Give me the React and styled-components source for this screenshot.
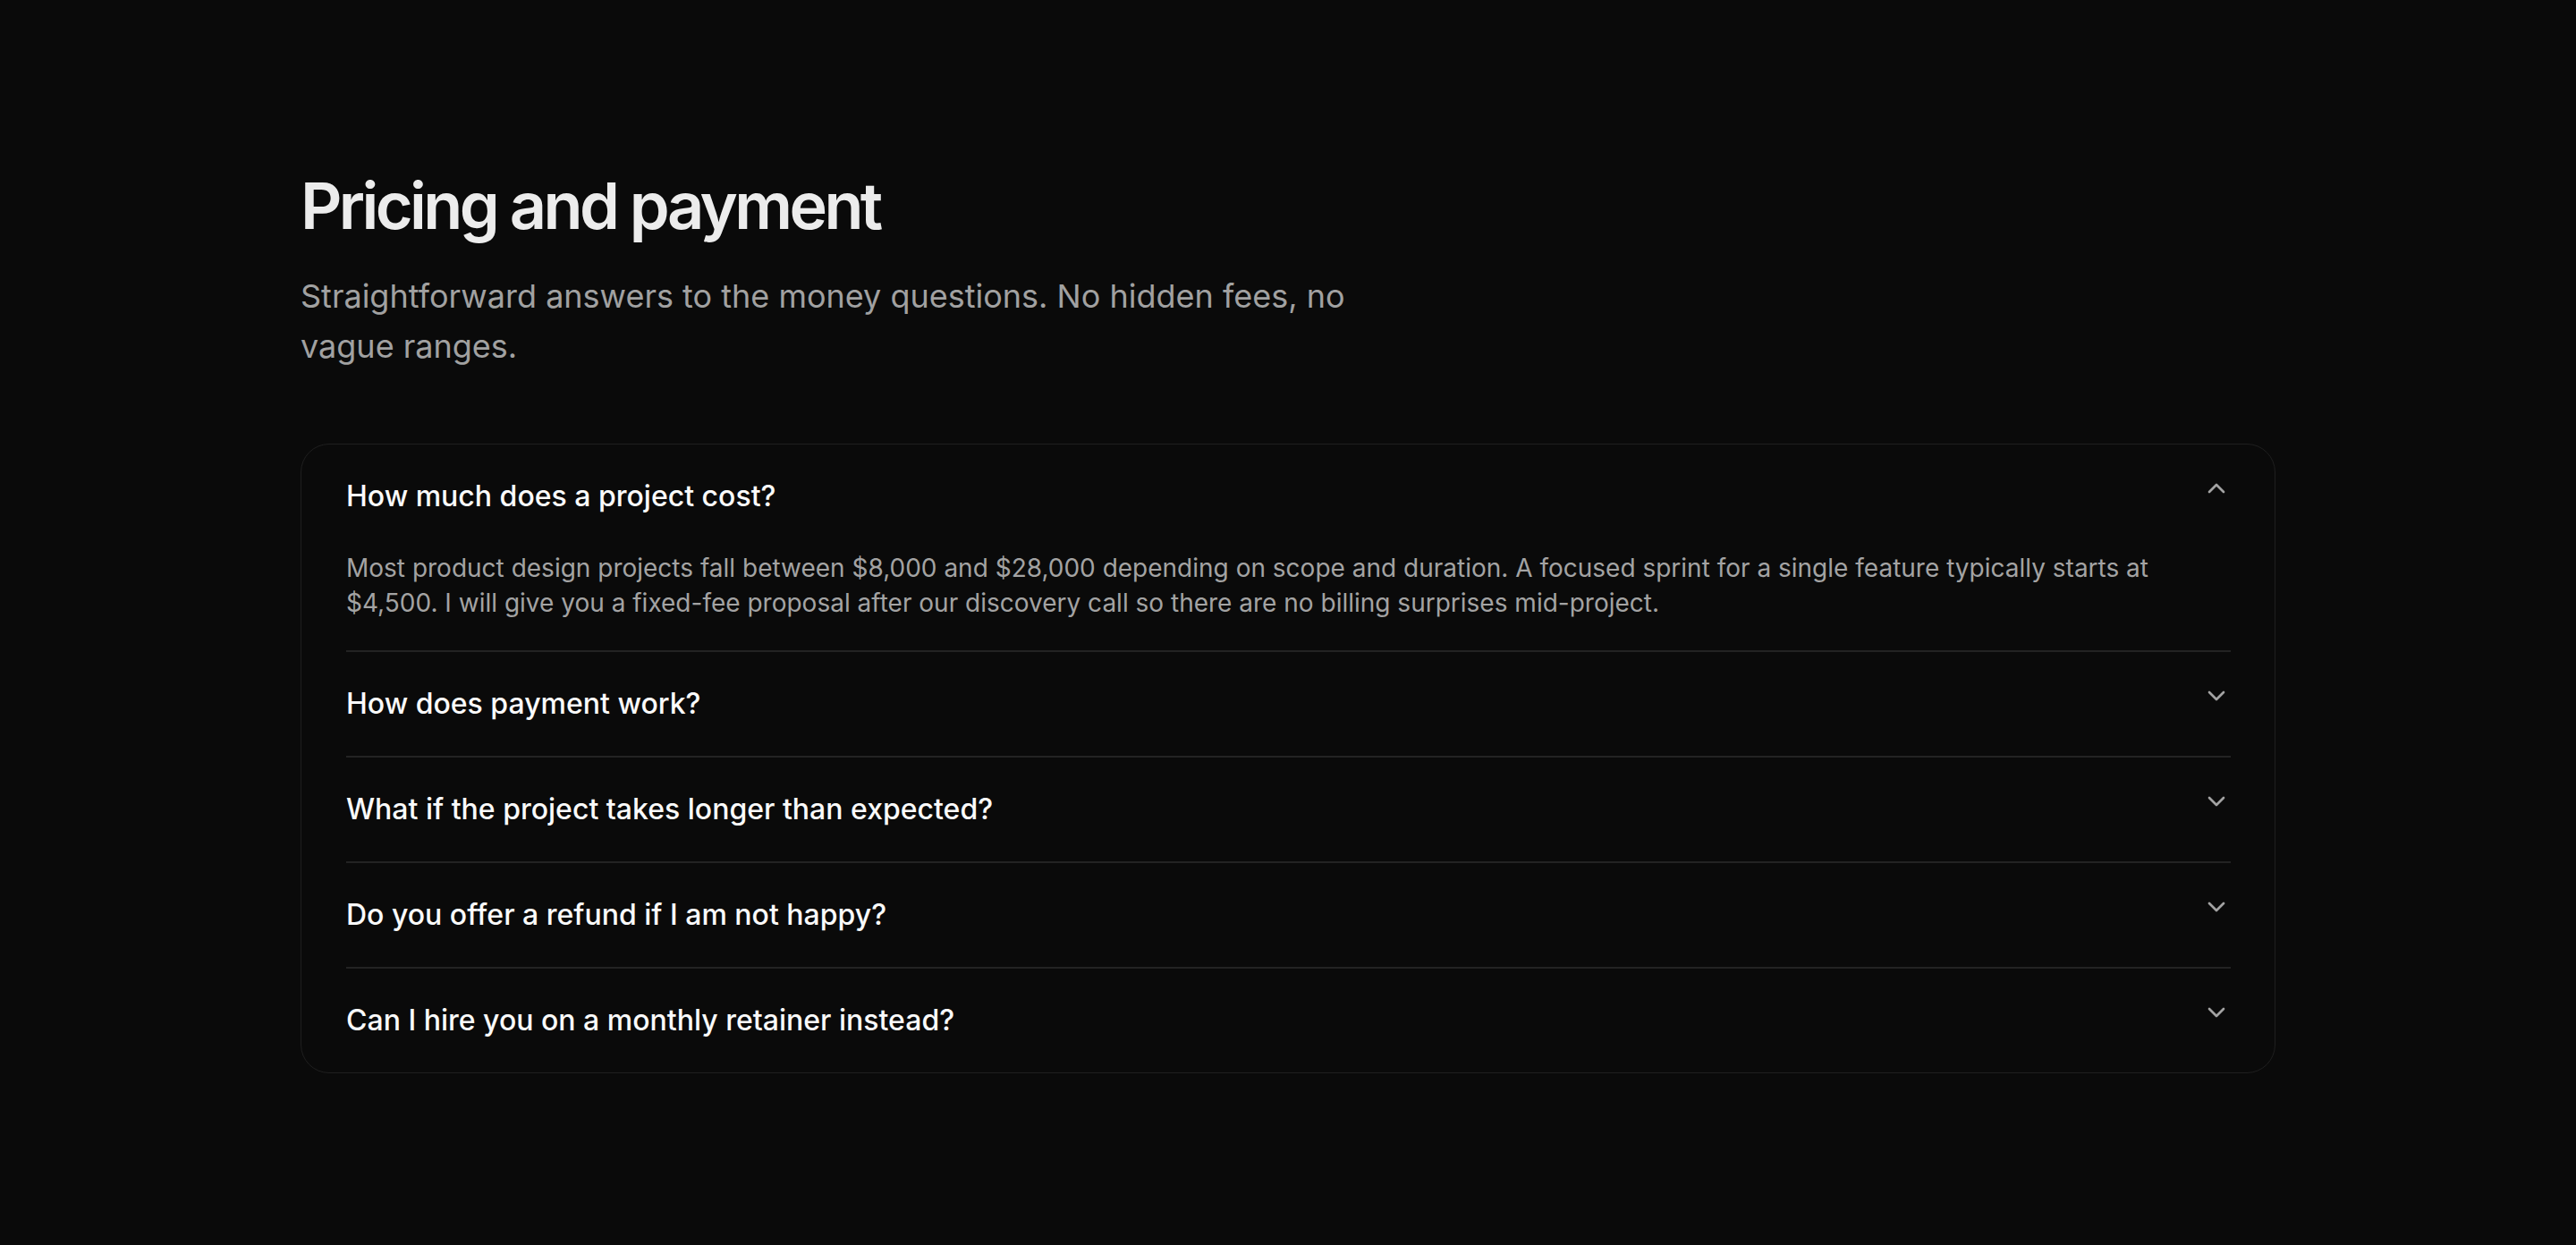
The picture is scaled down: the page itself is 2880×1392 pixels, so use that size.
import React, { useState } from 'react';
import styled, { createGlobalStyle } from 'styled-components';
import { ChevronDown, ChevronUp } from 'lucide-react';

const GlobalStyle = createGlobalStyle`
	* {
		box-sizing: border-box;
	}
	body {
		margin: 0;
		background: #0a0a0a;
		font-family: Inter, "Noto Sans", sans-serif;
		-webkit-font-smoothing: antialiased;
	}
`;

const faqs = [
	{
		q: 'How much does a project cost?',
		a: 'Most product design projects fall between $8,000 and $28,000 depending on scope and duration. A focused sprint for a single feature typically starts at $4,500. I will give you a fixed-fee proposal after our discovery call so there are no billing surprises mid-project.'
	},
	{
		q: 'How does payment work?',
		a: 'I invoice 50% up front to reserve your slot and the remaining 50% on delivery. Invoices are payable by bank transfer or card within 14 days.'
	},
	{
		q: 'What if the project takes longer than expected?',
		a: 'The fee is fixed for the agreed scope. If the scope changes, we agree on any additional work in writing before it starts.'
	},
	{
		q: 'Do you offer a refund if I am not happy?',
		a: 'If you are not happy after the first milestone, you can end the project and keep everything delivered so far, with no further charges.'
	},
	{
		q: 'Can I hire you on a monthly retainer instead?',
		a: 'Yes. Retainers start at a minimum of three months and include a set number of design days each month.'
	}
];

const App = () => {
	const [ open, setOpen ] = useState(0);

	return (
		<Page>
			<GlobalStyle />
			<Section>
				<Title>Pricing and payment</Title>
				<Lead>Straightforward answers to the money questions. No hidden fees, no vague ranges.</Lead>
				<Card>
					{faqs.map((item, i) => (
						<Item key={item.q}>
							<Question onClick={() => setOpen(open === i ? -1 : i)}>
								<span>{item.q}</span>
								{open === i ? (
									<ChevronUp size={32} strokeWidth={2} />
								) : (
									<ChevronDown size={32} strokeWidth={2} />
								)}
							</Question>
							{open === i && <Answer>{item.a}</Answer>}
						</Item>
					))}
				</Card>
			</Section>
		</Page>
	);
};

const Page = styled.main`
	min-height: 100vh;
	background: #0a0a0a;
	padding: 190px 0 120px;
`;

const Section = styled.section`
	width: 2208px;
	margin: 0 auto;
`;

const Title = styled.h2`
	margin: 0;
	font-size: 72px;
	line-height: 79px;
	font-weight: 600;
	letter-spacing: -0.05em;
	color: #ececec;
`;

const Lead = styled.p`
	margin: 34px 0 0;
	max-width: 1200px;
	font-size: 36px;
	line-height: 56px;
	font-weight: 400;
	color: #a1a1a1;
`;

const Card = styled.div`
	margin-top: 81px;
	border: 1px solid #1f1f1f;
	border-radius: 32px;
	padding: 0 49px 0 50px;
`;

const Item = styled.div`
	& + & {
		border-top: 2px solid #232323;
	}
`;

const Question = styled.button`
	display: flex;
	width: 100%;
	align-items: flex-start;
	justify-content: space-between;
	gap: 32px;
	padding: 36px 0;
	margin: 0;
	border: none;
	background: transparent;
	cursor: pointer;
	text-align: left;
	font-family: inherit;
	font-size: 32px;
	line-height: 44px;
	font-weight: 500;
	color: #fafafa;

	svg {
		flex-shrink: 0;
		margin-top: -3px;
		color: #a3a3a3;
	}
`;

const Answer = styled.p`
	margin: 0;
	padding: 3px 0 33px;
	font-size: 28px;
	line-height: 39px;
	font-weight: 400;
	color: #a3a3a3;
`;

export default App;
